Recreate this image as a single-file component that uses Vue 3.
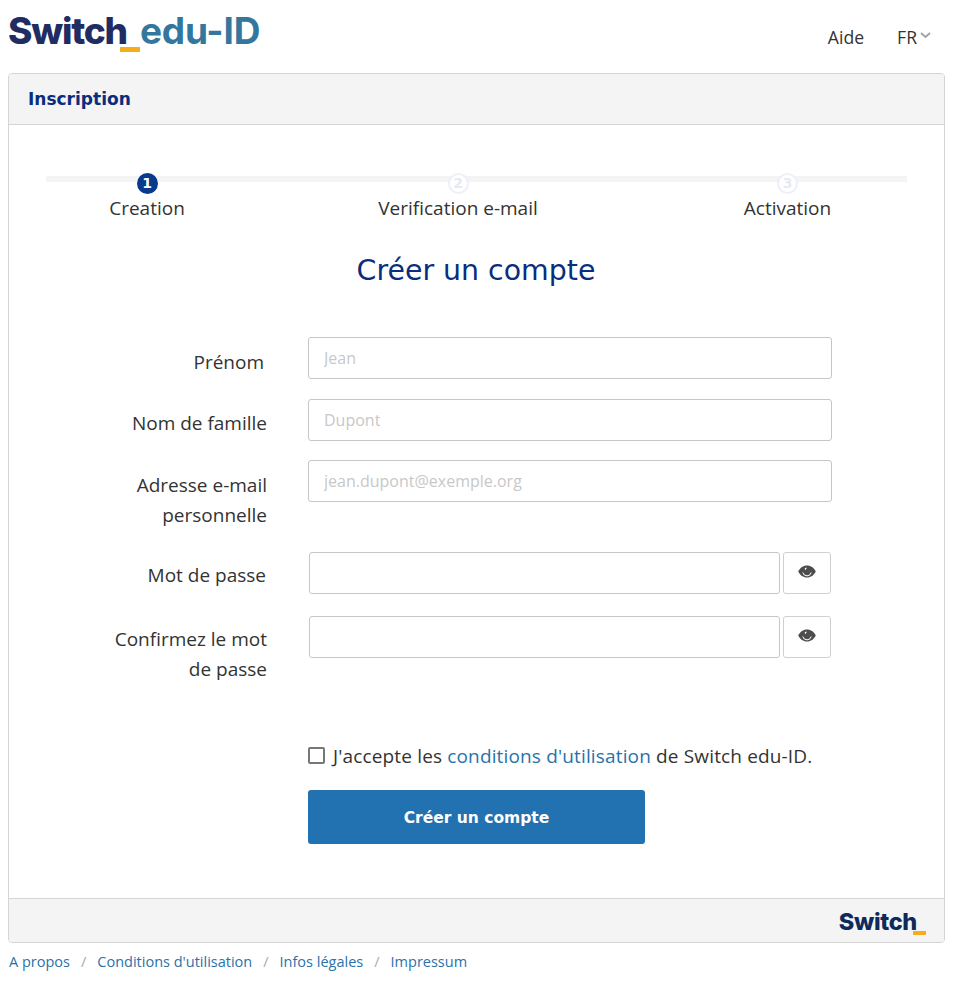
<template>
  <div class="page">
    <header class="top">
      <div class="logo">
        <span class="logo__switch">Switch<i class="logo__bar"></i></span>
        <span class="logo__edu">edu-ID</span>
      </div>
      <nav class="top__nav">
        <a>Aide</a>
        <a class="lang">
          FR
          <svg width="11" height="7" viewBox="0 0 11 7"><path d="M1 1l4.500 4L10 1" fill="none" stroke="#a3a3a3" stroke-width="2" /></svg>
        </a>
      </nav>
    </header>

    <section class="card">
      <div class="card__head">Inscription</div>
      <div class="card__body">
        <div class="steps">
          <div class="steps__line"></div>
          <div v-for="step in steps" :key="step.num" class="step" :class="{ 'step--active': step.active }">
            <span class="step__num">{{ step.num }}</span>
            <span class="step__label">{{ step.label }}</span>
          </div>
        </div>

        <h1 class="title">Créer un compte</h1>

        <form class="form" @submit.prevent>
          <div v-for="row in rows" :key="row.label" class="row" :class="row.cls">
            <label class="row__label">{{ row.label }}</label>
            <div class="row__field">
              <input :type="row.eye ? 'password' : 'text'" :placeholder="row.placeholder">
              <button v-if="row.eye" type="button" class="eye">
                <svg width="18" height="13" viewBox="0 0 18 13">
                  <path fill="#4d4d4d" d="M9 .5c3.800 0 7 2.300 8.800 6-1.800 3.700-5 6-8.800 6s-7-2.300-8.800-6C2 2.800 5.200.5 9 .5z" />
                  <path fill="none" stroke="#fff" stroke-width="1" d="M4.800 7.500a4.300 4.300 0 0 0 8.400 0" />
                  <path fill="#fff" d="M6.800 3.200c.7-.5 1.500-.6 2.200-.5-.6.700-1.300 1.500-1.700 2.600-.4-.6-.6-1.400-.5-2.100z" />
                </svg>
              </button>
            </div>
          </div>

          <label class="accept">
            <span class="accept__box"></span>
            <span>J'accepte les <a>conditions d'utilisation</a> de Switch edu-ID.</span>
          </label>
          <button type="submit" class="submit">Créer un compte</button>
        </form>
      </div>
      <div class="card__foot">
        <span class="foot-logo">Switch<i class="foot-logo__bar"></i></span>
      </div>
    </section>

    <footer class="links">
      <template v-for="(link, i) in links" :key="link">
        <span v-if="i > 0" class="links__sep">/</span>
        <a>{{ link }}</a>
      </template>
    </footer>
  </div>
</template>

<script setup>
const steps = [
  { num: 1, label: 'Creation', active: true },
  { num: 2, label: 'Verification e-mail' },
  { num: 3, label: 'Activation' }
]

const rows = [
  { label: 'Prénom', placeholder: 'Jean', cls: 'row--first' },
  { label: 'Nom de famille', placeholder: 'Dupont', cls: 'row--second' },
  { label: 'Adresse e-mail personnelle', placeholder: 'jean.dupont@exemple.org', cls: 'row--mail' },
  { label: 'Mot de passe', eye: true, cls: 'row--pass' },
  { label: 'Confirmez le mot de passe', eye: true, cls: 'row--confirm' }
]

const links = ['A propos', "Conditions d'utilisation", 'Infos légales', 'Impressum']
</script>

<style>
html, body {
  background: #fff;
}
</style>

<style scoped>
.page {
  width: 956px;
  height: 982px;
  padding: 0 11px 0 8px;
  box-sizing: border-box;
  font-family: "Open Sans", sans-serif;
  color: #333;
  font-size: 19px;
  overflow: hidden;
}
a {
  color: #2a72a8;
}
.top {
  height: 73px;
  display: flex;
  justify-content: space-between;
  align-items: flex-start;
}
.logo {
  display: flex;
  gap: 13px;
  font-family: Inter, sans-serif;
  font-weight: 800;
  font-size: 37px;
  line-height: 44px;
  margin-top: 9px;
}
.logo__switch {
  position: relative;
  color: #1f2d63;
  letter-spacing: -1.2px;
}
.logo__bar {
  position: absolute;
  right: -13px;
  top: 38px;
  width: 20px;
  height: 5px;
  background: #f5ad1c;
}
.logo__edu {
  color: #33769e;
  font-weight: 700;
  letter-spacing: -0.2px;
}
.top__nav {
  display: flex;
  gap: 33px;
  margin: 25px 14px 0 0;
  line-height: 24px;
  font-size: 17.600px;
}
.top__nav a {
  color: #333;
}
.lang {
  display: flex;
  align-items: center;
  gap: 3px;
}
.lang svg {
  margin-top: -3px;
}
.card {
  height: 870px;
  border: 1px solid #d5d5d5;
  border-radius: 4px;
  box-sizing: border-box;
  display: flex;
  flex-direction: column;
  overflow: hidden;
}
.card__head {
  height: 51px;
  flex: none;
  box-sizing: border-box;
  background: #f4f4f4;
  border-bottom: 1px solid #d5d5d5;
  padding-left: 19px;
  font-family: "DejaVu Sans", sans-serif;
  font-weight: 700;
  font-size: 17px;
  line-height: 50px;
  color: #0a2d7d;
}
.card__body {
  flex: 1;
  padding: 51px 37px 0;
}
.steps {
  position: relative;
  display: grid;
  grid-template-columns: 202px 420px 239px;
  width: 861px;
}
.steps__line {
  position: absolute;
  left: 0;
  right: 0;
  top: 0;
  height: 6px;
  background: #f4f4f4;
}
.step {
  position: relative;
  display: flex;
  flex-direction: column;
  align-items: center;
  line-height: 24px;
}
.step__num {
  width: 21px;
  height: 21px;
  box-sizing: border-box;
  margin-top: -3px;
  border-radius: 50%;
  border: 2px solid #eef0f8;
  background: #fff;
  color: #e6e9f5;
  font-family: "DejaVu Sans", sans-serif;
  font-weight: 700;
  font-size: 14px;
  line-height: 17px;
  text-align: center;
}
.step--active .step__num {
  background: #0a3a8c;
  border-color: #0a3a8c;
  color: #fff;
}
.step__label {
  margin-top: 2px;
}
.title {
  margin: 32px 0 0 37px;
  width: 786px;
  text-align: center;
  font-family: "DejaVu Sans", sans-serif;
  font-weight: 400;
  font-size: 28.400px;
  line-height: 38px;
  color: #0a2d7d;
}
.form {
  margin-top: 47px;
}
.row {
  display: flex;
  align-items: flex-start;
}
.row__label {
  width: 160px;
  margin-left: 61px;
  flex: none;
  text-align: right;
  line-height: 30px;
  padding-top: 10px;
}
.row__field {
  margin-left: 41px;
  width: 524px;
  display: flex;
  gap: 3px;
}
.row--first {
  height: 62px;
}
.row--first .row__label {
  margin-left: 58px;
  margin-right: 3px;
}
.row--second {
  height: 61px;
}
.row--second .row__label {
  padding-top: 9px;
}
.row--mail {
  height: 92px;
}
.row--pass {
  height: 64px;
}
.row--confirm {
  height: 128px;
}
.row--pass .row__label {
  margin-left: 60px;
  margin-right: 1px;
}
.row--pass .row__label,
.row--confirm .row__label {
  padding-top: 8px;
}
.row--pass .row__field,
.row--confirm .row__field {
  margin-left: 42px;
  width: 522px;
}
input {
  flex: 1;
  min-width: 0;
  height: 42px;
  box-sizing: border-box;
  border: 1px solid #c6c6c6;
  border-radius: 3px;
  padding: 0 15px;
  font-family: inherit;
  font-size: 16px;
  background: #fff;
}
input::placeholder {
  color: #c8c8c8;
}
.eye {
  width: 48px;
  height: 42px;
  flex: none;
  padding: 0 0 3px;
  background: #fff;
  border: 1px solid #d0d0d0;
  border-radius: 3px;
  display: flex;
  align-items: center;
  justify-content: center;
}
.accept {
  display: flex;
  align-items: center;
  gap: 8px;
  margin-left: 262px;
  height: 24px;
  letter-spacing: 0.15px;
}
.accept__box {
  width: 13px;
  height: 13px;
  border: 2px solid #777;
  border-radius: 2px;
  margin-top: -2px;
}
.submit {
  display: block;
  margin: 22px 0 0 262px;
  padding: 2px 0 0;
  width: 337px;
  height: 54px;
  border: 0;
  border-radius: 3px;
  background: #2271b1;
  color: #fff;
  font-family: "DejaVu Sans", sans-serif;
  font-weight: 700;
  font-size: 15.500px;
}
.card__foot {
  height: 44px;
  flex: none;
  box-sizing: border-box;
  background: #f4f4f4;
  border-top: 1px solid #d5d5d5;
  text-align: right;
  padding: 8px 27px 0 0;
}
.foot-logo {
  position: relative;
  display: inline-block;
  font-family: Inter, sans-serif;
  font-weight: 800;
  font-size: 23.500px;
  letter-spacing: -0.3px;
  line-height: 30px;
  color: #0e2a5c;
}
.foot-logo__bar {
  position: absolute;
  right: -9px;
  top: 24px;
  width: 13px;
  height: 4px;
  background: #f5ad1c;
}
.links {
  margin: 9px 0 0 1px;
  font-size: 14.500px;
  line-height: 20px;
}
.links__sep {
  color: #aaa;
  margin: 0 11px;
}
</style>
